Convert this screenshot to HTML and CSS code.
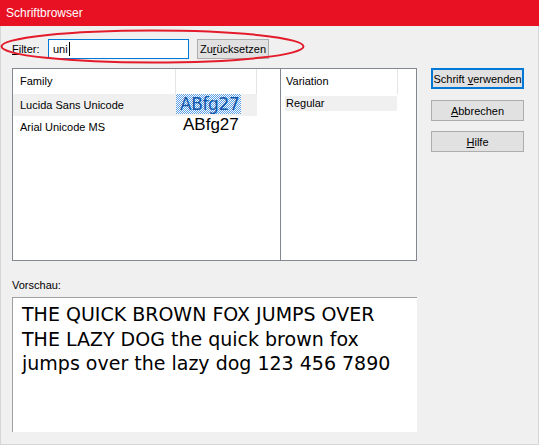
FILE: index.html
```html
<!DOCTYPE html>
<html lang="de">
<head>
<meta charset="utf-8">
<title>Schriftbrowser</title>
<link rel="stylesheet" href="styles.css">
</head>
<body>
<div class="window">
  <div class="titlebar">Schriftbrowser</div>
  <div class="client">
    <div class="filter-row">
      <label class="filter-label"><u>F</u>ilter:</label>
      <div class="input"><span class="input-text">uni</span><span class="caret"></span></div>
      <button class="btn btn-reset">Zu<u>r</u>ücksetzen</button>
    </div>
    <div class="main">
      <div class="left">
        <div class="lists">
          <div class="list list-family">
            <div class="row hdr">
              <div class="cell c-name">Family</div>
              <div class="cell c-sample"></div>
            </div>
            <div class="row sel">
              <div class="cell c-name">Lucida Sans Unicode</div>
              <div class="cell c-sample"><span class="sample sample-lucida">ABfg27</span></div>
            </div>
            <div class="row">
              <div class="cell c-name">Arial Unicode MS</div>
              <div class="cell c-sample"><span class="sample sample-arial">ABfg27</span></div>
            </div>
          </div>
          <div class="list list-var">
            <div class="vhdr">Variation</div>
            <div class="vrow">Regular</div>
          </div>
        </div>
        <div class="preview-label">Vorschau:</div>
        <div class="preview">THE QUICK BROWN FOX JUMPS OVER THE LAZY DOG the quick brown fox jumps over the lazy dog 123 456 7890</div>
      </div>
      <div class="buttons">
        <button class="btn btn-default">Schrift <u>v</u>erwenden</button>
        <button class="btn btn-cancel"><u>A</u>bbrechen</button>
        <button class="btn btn-help"><u>H</u>ilfe</button>
      </div>
    </div>
  </div>
  <svg class="annotation" width="539" height="80" viewBox="0 0 539 80" aria-hidden="true">
    <ellipse cx="152.5" cy="46.5" rx="151" ry="16" fill="none" stroke="#e31b2b" stroke-width="2"/>
  </svg>
</div>
</body>
</html>
```
FILE: styles.css
```css
* { box-sizing: border-box; }
html, body { margin: 0; padding: 0; background: #f0f0f0; }
body { font-family: "Liberation Sans", Arial, sans-serif; font-size: 11px; color: #000; }

.window {
  position: relative;
  width: 539px;
  height: 445px;
  background: #f0f0f0;
  overflow: hidden;
}

.titlebar {
  height: 26px;
  background: #e81123;
  color: #fff;
  font-size: 12px;
  line-height: 26px;
  padding-left: 6px;
}

.client {
  height: 419px;
  border: 1px solid #d6d6d6;
  border-top: none;
  padding: 13px 0 0 11px;
}

.filter-row {
  display: flex;
  align-items: center;
  height: 20px;
}
.filter-label { width: 36px; line-height: 20px; }
.input {
  width: 141px;
  height: 20px;
  border: 1px solid #0078d7;
  background: #fff;
  padding-left: 4px;
  display: flex;
  align-items: center;
  margin-right: 8px;
}
.caret {
  display: inline-block;
  width: 1px;
  height: 14px;
  background: #000;
  margin-left: 1px;
}

.btn {
  font-family: "Liberation Sans", Arial, sans-serif;
  font-size: 11px;
  color: #000;
  background: #e1e1e1;
  border: 1px solid #adadad;
  padding: 0;
  margin: 0;
  text-align: center;
  white-space: nowrap;
}
.btn-reset { width: 72px; height: 20px; }

.main { display: flex; margin-top: 9px; }
.left { width: 405px; display: flex; flex-direction: column; }

.lists {
  height: 193px;
  border: 1px solid #828790;
  background: #fff;
  display: flex;
}
.list-family { width: 268px; border-right: 1px solid #828790; }
.list-var { flex: 1; }

.row { display: flex; width: 244px; height: 22px; }
.row.hdr { height: 25px; }
.row.sel { background: #f0f0f0; }
.cell { line-height: 22px; white-space: nowrap; }
.hdr .cell { line-height: 25px; background: #fff; }
.c-name { width: 163px; padding-left: 7px; }
.c-sample { width: 81px; }
.hdr .c-name, .hdr .c-sample { border-right: 1px solid #e5e5e5; }

.sample { display: block; white-space: nowrap; }
.sample-lucida {
  width: 65px;
  height: 20px;
  line-height: 20px;
  padding-left: 4px;
  font-family: "DejaVu Sans", sans-serif;
  font-size: 17px;
  letter-spacing: -0.4px;
  color: #0f55a8;
  background-image: repeating-conic-gradient(#5a9fe8 0 25%, #ffffff 0 50%);
  background-size: 2px 2px;
}
.sample-arial {
  padding-left: 7px;
  font-family: "Liberation Sans", Arial, sans-serif;
  font-size: 17px;
  line-height: 18px;
}

.vhdr {
  width: 117px;
  height: 25px;
  line-height: 25px;
  padding-left: 5px;
  border-right: 1px solid #e5e5e5;
}
.vrow {
  width: 112px;
  height: 15px;
  line-height: 15px;
  margin: 2px 0 0 4px;
  padding-left: 1px;
  background: #f0f0f0;
}

.preview-label { margin-top: 17px; line-height: 14px; }
.preview {
  margin-top: 5px;
  height: 135px;
  background: #fff;
  border-top: 1px solid #a0a0a0;
  border-left: 1px solid #a0a0a0;
  padding: 4px 10px 0 9px;
  font-family: "DejaVu Sans", sans-serif;
  font-size: 19px;
  line-height: 24.5px;
}

.buttons {
  margin-left: 14px;
  width: 93px;
  display: flex;
  flex-direction: column;
}
.buttons .btn { width: 93px; height: 21px; }
.btn-default { border: 2px solid #0078d7; }
.btn-cancel { margin-top: 11px; }
.btn-help { margin-top: 10px; }

.annotation {
  position: absolute;
  left: 0;
  top: 0;
  pointer-events: none;
}
```
